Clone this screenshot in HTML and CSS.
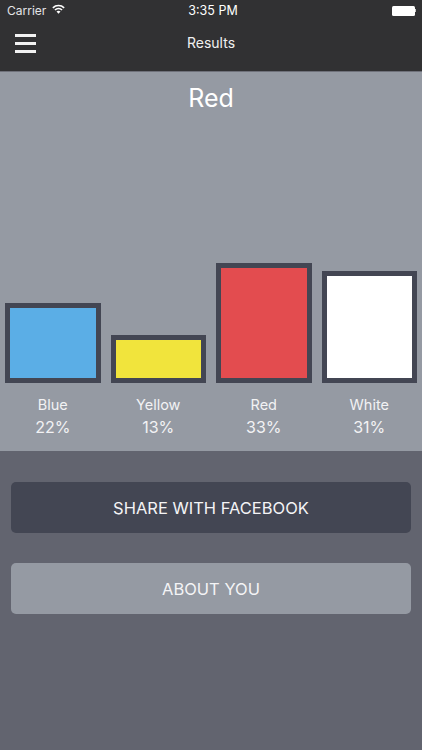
FILE: index.html
```html
<!DOCTYPE html>
<html lang="en">

<head>
  <meta charset="UTF-8">
  <meta name="viewport" content="width=device-width, initial-scale=1.0">
  <title>Results</title>
  <link rel="stylesheet" href="styles.css">
</head>

<body>
  <header class="top">
    <div class="status">
      <div class="status-left">
        <span>Carrier</span>
        <svg class="wifi" width="13" height="10" viewBox="0 0 13 10">
          <path d="M0.3 3.2A9 9 0 0 1 12.7 3.2L11.6 4.4A7.4 7.4 0 0 0 1.4 4.4Z" fill="#fff" />
          <path d="M2.4 5.4A6 6 0 0 1 10.6 5.4L9.5 6.6A4.4 4.4 0 0 0 3.5 6.6Z" fill="#fff" />
          <path d="M4.5 7.6A3 3 0 0 1 8.5 7.6L6.5 9.8Z" fill="#fff" />
        </svg>
      </div>
      <span class="time">3:35 PM</span>
      <div class="battery">
        <span class="battery-body"></span>
        <span class="battery-tip"></span>
      </div>
    </div>
    <nav class="nav">
      <button class="menu" aria-label="Menu">
        <span></span>
        <span></span>
        <span></span>
      </button>
      <span class="nav-title">Results</span>
    </nav>
  </header>

  <section class="results">
    <h1>Red</h1>
    <div class="chart">
      <div class="col">
        <div class="bar blue"></div>
        <p>Blue</p>
        <p class="pct">22%</p>
      </div>
      <div class="col">
        <div class="bar yellow"></div>
        <p>Yellow</p>
        <p class="pct">13%</p>
      </div>
      <div class="col">
        <div class="bar red"></div>
        <p>Red</p>
        <p class="pct">33%</p>
      </div>
      <div class="col">
        <div class="bar white"></div>
        <p>White</p>
        <p class="pct">31%</p>
      </div>
    </div>
  </section>

  <section class="actions">
    <button class="btn dark">SHARE WITH FACEBOOK</button>
    <button class="btn light">ABOUT YOU</button>
  </section>
</body>

</html>
```

FILE: styles.css
```css
body {
  font-family: Inter, 'Liberation Sans', sans-serif;
  background-color: #62646f;
  color: #fff;
  margin: 0;
  padding: 0;
  width: 422px;
  height: 750px;
  overflow: hidden;
  display: flex;
  flex-direction: column;
}

/* Top bar */
.top {
  height: 71px;
  background-color: #313133;
  flex-shrink: 0;
}

.status {
  height: 21px;
  padding: 0 6px 0 7px;
  display: flex;
  justify-content: space-between;
  align-items: center;
  font-size: 12px;
  position: relative;
}

.status-left {
  display: flex;
  align-items: center;
  gap: 6px;
  color: #e4e4e6;
}

.wifi {
  margin-top: -3px;
}

.time {
  position: absolute;
  left: 4px;
  right: 0;
  text-align: center;
  font-size: 12.5px;
}

.battery {
  display: flex;
  align-items: center;
}

.battery-body {
  width: 23px;
  height: 10px;
  background-color: #fff;
  border-radius: 1.5px;
}

.battery-tip {
  width: 1.5px;
  height: 3px;
  background-color: #ccc;
}

.nav {
  height: 45px;
  margin-top: -1px;
  display: flex;
  justify-content: center;
  align-items: center;
  position: relative;
}

.menu {
  position: absolute;
  left: 15px;
  top: 14px;
  width: 21px;
  height: 19px;
  padding: 0;
  background: none;
  border: 0;
  display: flex;
  flex-direction: column;
  justify-content: space-between;
}

.menu span {
  display: block;
  height: 3px;
  background-color: #f2f2f2;
}

.nav-title {
  font-size: 14px;
  color: #f0f0f0;
}

/* Chart */
.results {
  height: 380px;
  background-color: #959aa3;
  border-top: 1px solid #6f717a;
  box-sizing: border-box;
  padding: 0 5px;
  display: flex;
  flex-direction: column;
  flex-shrink: 0;
}

h1 {
  margin: 11px 0 0;
  text-align: center;
  font-size: 25px;
  line-height: 30px;
  font-weight: 400;
}

.chart {
  flex: 1;
  display: grid;
  grid-template-columns: repeat(4, 1fr);
  gap: 10px;
  align-items: end;
  padding-bottom: 13px;
}

.col {
  text-align: center;
  font-size: 14.5px;
  line-height: 22px;
  color: #f2f2f4;
}

.col p {
  margin: 0;
}

.col .pct {
  font-size: 16px;
}

.bar {
  border: 5px solid #434653;
  box-sizing: border-box;
  margin-bottom: 11px;
}

.bar.blue {
  height: 80px;
  background-color: #5baee6;
}

.bar.yellow {
  height: 48px;
  background-color: #f1e43c;
}

.bar.red {
  height: 120px;
  background-color: #e34c4f;
}

.bar.white {
  height: 112px;
  background-color: #fff;
}

/* Buttons */
.actions {
  padding: 31px 11px 0;
  display: flex;
  flex-direction: column;
  gap: 30px;
}

.btn {
  height: 51px;
  border: 0;
  border-radius: 5px;
  font-family: inherit;
  font-size: 16.5px;
  color: #f4f4f6;
}

.btn.dark {
  background-color: #434653;
}

.btn.light {
  background-color: #959aa3;
}
```
